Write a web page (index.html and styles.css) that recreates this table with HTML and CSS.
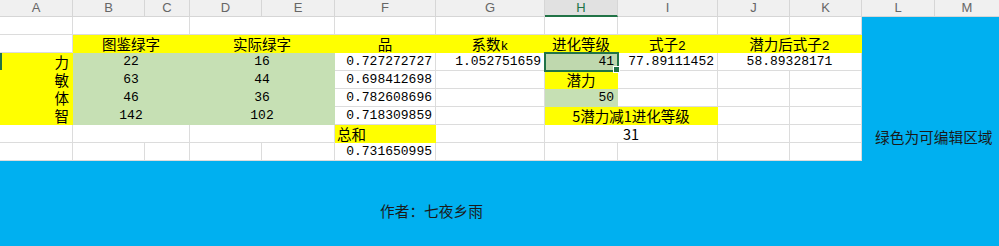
FILE: index.html
```html
<!DOCTYPE html>
<html lang="zh">
<head>
<meta charset="utf-8">
<title>Sheet</title>
<link rel="stylesheet" href="styles.css">
</head>
<body>
<div class="sheet">
  <div class="hd">A</div><div class="hd">B</div><div class="hd">C</div><div class="hd">D</div><div class="hd">E</div><div class="hd">F</div><div class="hd">G</div><div class="hd hd-sel">H</div><div class="hd">I</div><div class="hd">J</div><div class="hd">K</div><div class="hd">L</div><div class="hd hd-last">M</div>

  <div class="note-block"><span class="note">绿色为可编辑区域</span></div>

  <!-- row 1 -->
  <div class="c"></div><div class="c s2"></div><div class="c s2"></div><div class="c"></div><div class="c"></div><div class="c"></div><div class="c"></div><div class="c"></div><div class="c"></div>

  <!-- row 2 -->
  <div class="c"></div>
  <div class="c s2 y ctr cjk">图鉴绿字</div>
  <div class="c s2 y ctr cjk">实际绿字</div>
  <div class="c y ctr cjk">品</div>
  <div class="c y ctr cjk">系数<span class="num">k</span></div>
  <div class="c y ctr cjk">进化等级</div>
  <div class="c y ctr cjk">式子<span class="num">2</span></div>
  <div class="c s2 y ctr cjk">潜力后式子<span class="num">2</span></div>

  <!-- row 3 -->
  <div class="c y rt cjk row-mark">力</div>
  <div class="c s2 g ctr num">22</div>
  <div class="c s2 g ctr num">16</div>
  <div class="c rt num">0.727272727</div>
  <div class="c rt num">1.052751659</div>
  <div class="c g rt num sel">41</div>
  <div class="c rt num">77.89111452</div>
  <div class="c s2 ctr num">58.89328171</div>

  <!-- row 4 -->
  <div class="c y rt cjk">敏</div>
  <div class="c s2 g ctr num">63</div>
  <div class="c s2 g ctr num">44</div>
  <div class="c rt num">0.698412698</div>
  <div class="c"></div>
  <div class="c y ctr cjk">潜力</div>
  <div class="c"></div><div class="c"></div><div class="c"></div>

  <!-- row 5 -->
  <div class="c y rt cjk">体</div>
  <div class="c s2 g ctr num">46</div>
  <div class="c s2 g ctr num">36</div>
  <div class="c rt num">0.782608696</div>
  <div class="c"></div>
  <div class="c g rt num">50</div>
  <div class="c"></div><div class="c"></div><div class="c"></div>

  <!-- row 6 -->
  <div class="c y rt cjk">智</div>
  <div class="c s2 g ctr num">142</div>
  <div class="c s2 g ctr num">102</div>
  <div class="c rt num">0.718309859</div>
  <div class="c"></div>
  <div class="c s2 y ctr cjk">5潜力减1进化等级</div>
  <div class="c"></div><div class="c"></div>

  <!-- row 7 -->
  <div class="c"></div><div class="c s2"></div><div class="c s2"></div>
  <div class="c y lt cjk">总和</div>
  <div class="c"></div>
  <div class="c s2 ctr cjk">31</div>
  <div class="c"></div><div class="c"></div>

  <!-- row 8 -->
  <div class="c"></div><div class="c"></div><div class="c"></div><div class="c"></div><div class="c"></div>
  <div class="c rt num">0.731650995</div>
  <div class="c"></div><div class="c"></div><div class="c"></div><div class="c"></div><div class="c"></div>

  <div class="author-band"><span class="author">作者：七夜乡雨</span></div>
</div>
</body>
</html>
```

FILE: styles.css
```css
html, body {
  margin: 0;
  padding: 0;
  background: #ffffff;
}

.sheet {
  width: 999px;
  height: 246px;
  overflow: hidden;
  display: grid;
  grid-template-columns: 73px 72px 45px 72px 73px 101px 109px 73px 100px 72px 72px 73px 1fr;
  grid-template-rows: 17px repeat(8, 18px) 85px;
  font-family: "Noto Sans CJK SC", "Liberation Sans", sans-serif;
  color: #000;
}

.hd {
  box-sizing: border-box;
  background: #f0f0f0;
  border-right: 1px solid #d6d6d6;
  border-bottom: 1px solid #d6d6d6;
  font-family: "Liberation Sans", "Noto Sans", sans-serif;
  font-size: 13px;
  color: #666;
  line-height: 16px;
  text-align: center;
}

.hd-sel {
  background: #e1e1e1;
  color: #217346;
  border-bottom: 2px solid #217346;
}

.hd-last {
  border-right: none;
}

.c {
  box-sizing: border-box;
  border-right: 1px solid #dcdcdc;
  border-bottom: 1px solid #dcdcdc;
  height: 18px;
  line-height: 18px;
  font-size: 14.5px;
  padding: 0 3px;
  white-space: nowrap;
  overflow: visible;
}

.s2 {
  grid-column: span 2;
}

.y {
  background: #ffff00;
  border-color: transparent;
}

.g {
  background: #c6e0b4;
  border-color: transparent;
}

.ctr { text-align: center; }
.rt { text-align: right; }
.lt { text-align: left; padding-left: 2px; }

.cjk {
  font-family: "Noto Sans CJK SC", "Liberation Sans", sans-serif;
  font-size: 14.5px;
}

.num {
  font-family: "Liberation Mono", "DejaVu Sans Mono", monospace;
  font-size: 13px;
}

.cjk .num {
  font-size: 13px;
}

.row-mark {
  box-shadow: inset 2px 0 0 #217346;
}

.sel {
  position: relative;
  z-index: 2;
  background: #bfd8ae;
  outline: 2px solid #217346;
  outline-offset: -1px;
}

.sel::after {
  content: "";
  position: absolute;
  right: -3px;
  bottom: -3px;
  width: 5px;
  height: 5px;
  background: #217346;
  border: 1px solid #fff;
}

.note-block {
  grid-column: 12 / 14;
  grid-row: 2 / 10;
  background: #00b0f0;
  display: flex;
  align-items: flex-end;
  padding: 0 0 15px 13px;
  box-sizing: border-box;
}

.note {
  font-size: 14.7px;
  line-height: 18px;
  white-space: nowrap;
  color: #1a1a1a;
}

.author-band {
  grid-column: 1 / -1;
  background: #00b0f0;
  padding: 37px 0 0 380px;
  box-sizing: border-box;
}

.author {
  font-size: 14.7px;
  line-height: 18px;
  color: #1a1a1a;
}
```
